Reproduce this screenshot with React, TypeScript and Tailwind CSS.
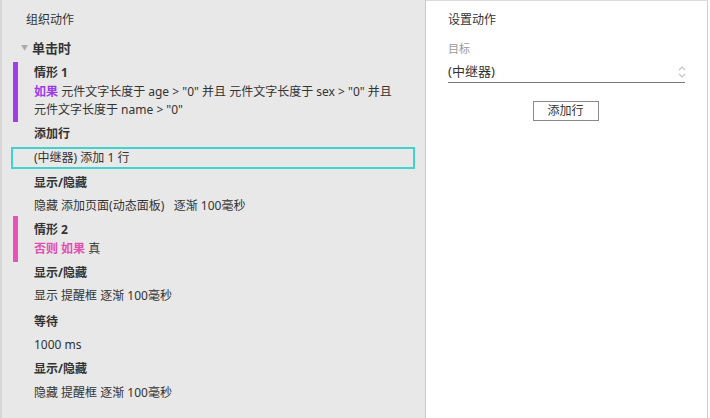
import React from 'react';

const font = { fontFamily: '"Segoe UI", "Noto Sans", "Noto Sans CJK SC", sans-serif' };

const Label: React.FC<{ children: React.ReactNode; className?: string }> = ({ children, className = '' }) => (
  <div className={`pl-[32px] text-[12px] font-bold text-[#333] leading-[16px] ${className}`}>{children}</div>
);

const Line: React.FC<{ children: React.ReactNode; className?: string }> = ({ children, className = '' }) => (
  <div className={`pl-[32px] text-[12px] text-[#333] leading-[16px] ${className}`}>{children}</div>
);

const Case: React.FC<{ color: string; title: string; children: React.ReactNode; className?: string; inner?: string }> = ({ color, title, children, className = '', inner = 'pt-[3px] pb-[1px]' }) => (
  <div className={`flex ${className}`}>
    <div className={`ml-[11px] w-[5px] ${color}`} />
    <div className={`pl-[16px] ${inner}`}>
      <div className="text-[12px] font-bold text-[#333] leading-[16px]">{title}</div>
      {children}
    </div>
  </div>
);

export default function App() {
  return (
    <div className="w-[710px] h-[418px] flex bg-white overflow-hidden" style={font}>
      {/* organise actions */}
      <div className="w-[426px] h-full bg-[#e8e8e8] border-l-2 border-[#d6d6d6] border-r border-r-[#c8c8c8] flex flex-col">
        <div className="pl-[24px] pt-[12px] text-[12px] text-[#333] leading-[16px]">组织动作</div>
        <div className="flex items-center pl-[19px] mt-[12px]">
          <span className="text-[7px] text-[#aaa] w-[11px]">▼</span>
          <span className="text-[13px] font-bold text-[#333] leading-[16px]">单击时</span>
        </div>
        <Case color="bg-[#a03ee8]" title="情形 1" className="mt-[6px]" inner="pt-[3px] pb-[3px]">
          <div className="text-[12px] text-[#333] leading-[18px] mt-[2px]">
            <span className="text-[#9b3be6] font-bold">如果</span> 元件文字长度于 age &gt; "0" 并且 元件文字长度于 sex &gt; "0" 并且
          </div>
          <div className="text-[12px] text-[#333] leading-[18px]">元件文字长度于 name &gt; "0"</div>
        </Case>
        <Label className="mt-[4px]">添加行</Label>
        <div className="ml-[9px] mr-[10px] mt-[5px] h-[22px] border-2 border-[#3fd3cf] flex items-center pl-[21px] text-[12px] text-[#333]">
          (中继器) 添加 1 行
        </div>
        <Label className="mt-[6px]">显示/隐藏</Label>
        <Line className="mt-[7px]">隐藏 添加页面(动态面板)&nbsp;&nbsp; 逐渐 100毫秒</Line>
        <Case color="bg-[#e653b5]" title="情形 2" className="mt-[2px]" inner="pt-[6px] pb-[4px]">
          <div className="text-[12px] text-[#333] leading-[18px] mt-[2px]">
            <span className="text-[#e24fb0] font-bold">否则 如果</span> 真
          </div>
        </Case>
        <Label className="mt-[3px]">显示/隐藏</Label>
        <Line className="mt-[7px]">显示 提醒框 逐渐 100毫秒</Line>
        <Label className="mt-[10px]">等待</Label>
        <Line className="mt-[7px]">1000 ms</Line>
        <Label className="mt-[8px]">显示/隐藏</Label>
        <Line className="mt-[8px]">隐藏 提醒框 逐渐 100毫秒</Line>
      </div>

      {/* set action */}
      <div className="flex-1 h-full border-t border-[#dcdcdc] border-r border-r-[#cfcfcf] mr-[2px] pl-[22px] pr-[22px]">
        <div className="pt-[11px] text-[12px] text-[#333] leading-[16px]">设置动作</div>
        <div className="mt-[14px] text-[11px] text-[#999] leading-[14px]">目标</div>
        <div className="mt-[5px] flex items-center justify-between border-b border-[#777] h-[22px]">
          <span className="text-[13px] text-[#333]">(中继器)</span>
          <svg width="10" height="14" viewBox="0 0 10 14" className="mr-[-2px]">
            <path d="M2 5 L5 2 L8 5" fill="none" stroke="#c4c4c4" strokeWidth="1.2" />
            <path d="M2 9 L5 12 L8 9" fill="none" stroke="#c4c4c4" strokeWidth="1.2" />
          </svg>
        </div>
        <div className="flex justify-center mt-[18px] pr-[2px]">
          <button className="w-[66px] h-[20px] border border-[#8a8a8a] bg-white text-[12px] text-[#333] leading-[18px]">添加行</button>
        </div>
      </div>
    </div>
  );
}
